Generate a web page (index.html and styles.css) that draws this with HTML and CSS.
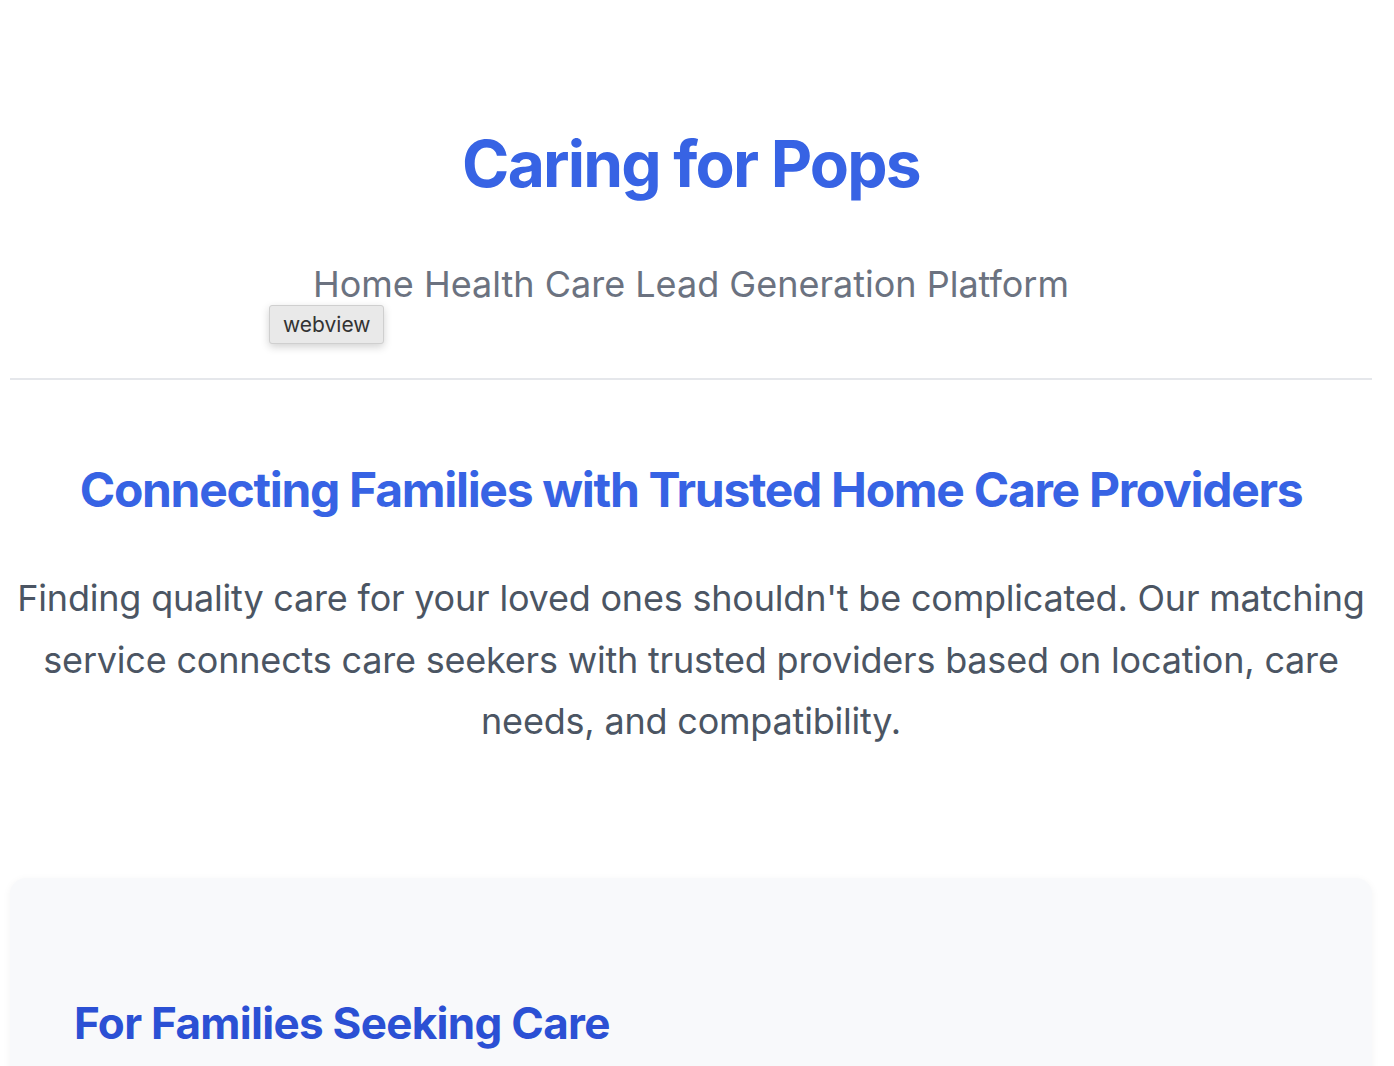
FILE: index.html
```html
<!DOCTYPE html>
<html lang="en">
<head>
<meta charset="utf-8">
<title>Caring for Pops</title>
<link rel="stylesheet" href="styles.css">
</head>
<body>
<div class="page">
  <header class="header">
    <h1 class="title">Caring for Pops</h1>
    <p class="subtitle">Home Health Care Lead Generation Platform</p>
    <span class="tooltip">webview</span>
  </header>
  <section class="intro">
    <h2 class="intro-title">Connecting Families with Trusted Home Care Providers</h2>
    <p class="intro-text">Finding quality care for your loved ones shouldn't be complicated. Our matching service connects care seekers with trusted providers based on location, care needs, and compatibility.</p>
  </section>
  <section class="card">
    <h3 class="card-title">For Families Seeking Care</h3>
  </section>
</div>
</body>
</html>
```

FILE: styles.css
```css
* { box-sizing: border-box; }
html, body { margin: 0; padding: 0; background: #ffffff; }
body {
  font-family: Inter, "Noto Sans", "Liberation Sans", sans-serif;
  overflow: hidden;
}
.page {
  padding: 0 22px 0 10px;
}
.header {
  position: relative;
  text-align: center;
  padding-top: 126px;
  padding-bottom: 72px;
  border-bottom: 2px solid #e5e7eb;
}
.title {
  margin: 0;
  font-size: 64px;
  font-weight: 700;
  line-height: 76px;
  letter-spacing: -1.8px;
  color: #3763e4;
}
.subtitle {
  margin: 60px 0 0;
  font-size: 36px;
  line-height: 44px;
  color: #6b7280;
}
.tooltip {
  position: absolute;
  left: 259px;
  top: 305px;
  padding: 0 13px 0 13px;
  height: 39px;
  line-height: 37px;
  font-size: 21px;
  color: #333;
  background: #e9e9e9;
  border: 1px solid #cfcfcf;
  border-radius: 3px;
  box-shadow: 0 3px 8px rgba(0,0,0,0.18);
}
.intro {
  text-align: center;
  padding-top: 81px;
}
.intro-title {
  margin: 0;
  font-size: 48px;
  line-height: 58px;
  font-weight: 700;
  letter-spacing: -1.3px;
  color: #3763e4;
}
.intro-text {
  margin: 49px 0 0;
  font-size: 36px;
  line-height: 61.5px;
  letter-spacing: -0.2px;
  color: #4b5563;
}
.card {
  margin-top: 125px;
  background: #f8f9fb;
  border-radius: 16px;
  box-shadow: 0 2px 8px rgba(0,0,0,0.05);
  padding: 118px 64px 80px;
  min-height: 400px;
}
.card-title {
  margin: 0;
  font-size: 44px;
  line-height: 54px;
  font-weight: 700;
  letter-spacing: -0.7px;
  color: #2b50d4;
}
```
